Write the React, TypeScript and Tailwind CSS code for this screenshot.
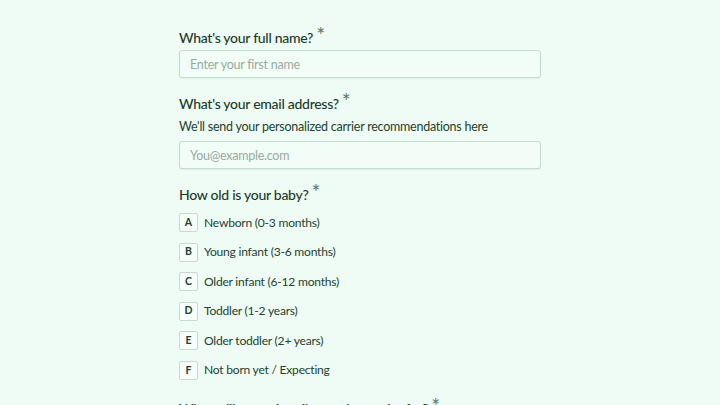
import React from 'react'

const options = [
  { key: 'A', label: 'Newborn (0-3 months)' },
  { key: 'B', label: 'Young infant (3-6 months)' },
  { key: 'C', label: 'Older infant (6-12 months)' },
  { key: 'D', label: 'Toddler (1-2 years)' },
  { key: 'E', label: 'Older toddler (2+ years)' },
  { key: 'F', label: 'Not born yet / Expecting' },
]

function Label({ children }: { children: React.ReactNode }) {
  return (
    <div className="flex items-start text-[14px] font-medium leading-5 tracking-[-0.02em] text-[#1b3a2b]">
      <span>{children}</span>
      <span className="ml-[3px] -mt-[3px] text-[21px] font-normal leading-5 text-[#5c7b6b]">*</span>
    </div>
  )
}

const inputCls =
  'h-[28px] w-full rounded-[3px] border border-[#c6dacf] bg-[#f3fdf8] px-[10px] text-[12.5px] tracking-[-0.02em] text-[#1b3a2b] placeholder:text-[#96ab9f] outline-none shadow-[0_1px_1px_rgba(60,100,80,0.08)]'

export default function App() {
  return (
    <div className="min-h-screen w-full bg-[#effcf5] font-['Lato',sans-serif] text-[#1b3a2b]">
      <div className="mx-auto w-[362px] pt-[28px]">
        <Label>What's your full name?</Label>
        <input className={`mt-[2px] ${inputCls}`} placeholder="Enter your first name" />

        <div className="mt-[16px]">
          <Label>What's your email address?</Label>
        </div>
        <p className="mt-[5px] text-[12.5px] leading-4 tracking-[-0.02em] text-[#24412f]">
          We'll send your personalized carrier recommendations here
        </p>
        <input className={`mt-[6px] ${inputCls}`} placeholder="You@example.com" />

        <div className="mt-[16px]">
          <Label>How old is your baby?</Label>
        </div>
        <div className="mt-[8px] flex flex-col gap-[10.6px]">
          {options.map(o => (
            <div key={o.key} className="flex items-center gap-[6px]">
              <span className="flex h-[19px] w-[19px] items-center justify-center rounded-[2px] border border-[#c6dacf] bg-[#f7fdfa] text-[10.5px] font-bold text-[#24412f]">
                {o.key}
              </span>
              <span className="text-[12.1px] leading-[18px] tracking-[-0.02em] text-[#24412f]">{o.label}</span>
            </div>
          ))}
        </div>

        <div className="mt-[19px]">
          <Label>What will you primarily use the carrier for?</Label>
        </div>
      </div>
    </div>
  )
}
